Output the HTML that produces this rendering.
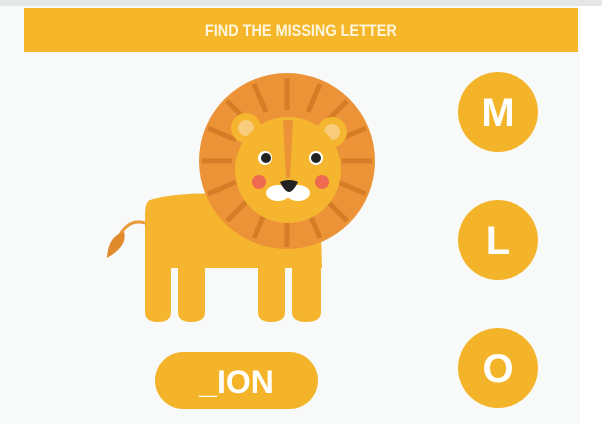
<!DOCTYPE html>
<html><head><style>
body{margin:0;width:602px;height:424px;background:#fff;overflow:hidden;font-family:"Liberation Sans",sans-serif;position:relative}
.top{position:absolute;left:0;top:0;width:602px;height:6px;background:#e4e6e8}
.page{position:absolute;left:0;top:6px;width:580px;height:418px;background:#f8f9f9}
.ban{position:absolute;left:24px;top:8px;width:554px;height:44px;background:#f5b62a;color:#fff6dd;font-weight:bold;font-size:17px;text-align:center;line-height:46px;letter-spacing:0px}
.ban span{display:inline-block;transform:scaleX(0.85)}
.c{position:absolute;width:80px;height:80px;border-radius:50%;background:#f4b42a;color:#fff;font-weight:900;font-size:40px;text-align:center;line-height:82px;left:458px}
.pill{position:absolute;left:155px;top:352px;width:163px;height:57px;border-radius:29px;background:#f4b42a;color:#fff;font-weight:900;font-size:32px;text-align:center;line-height:60px}
</style></head><body>
<div class="top"></div><div class="page"></div>
<div class="ban"><span>FIND THE MISSING LETTER</span></div>
<div class="c" style="top:72px">M</div>
<div class="c" style="top:200px">L</div>
<div class="c" style="top:328px">O</div>
<div class="pill">_ION</div>
<svg style="position:absolute;left:0;top:0" width="602" height="424">
<path d="M150 225 Q130 215 118 238" stroke="#e99a3a" stroke-width="3" fill="none"/>
<path d="M107 258 Q108 236 124 232 Q128 246 107 258Z" fill="#e08a2c"/>
<path d="M150 200 Q180 190 260 195 L320 200 L322 268 L145 268 L145 215 Q145 202 150 200Z" fill="#f5b52e"/>
<path d="M145 260 L171 260 L171 312 Q171 322 158 322 Q145 322 145 312Z" fill="#f5b52e"/>
<path d="M178 260 L205 260 L205 312 Q205 322 191 322 Q178 322 178 312Z" fill="#f5b52e"/>
<path d="M258 260 L285 260 L285 312 Q285 322 271 322 Q258 322 258 312Z" fill="#f5b52e"/>
<path d="M292 260 L321 260 L321 312 Q321 322 306 322 Q292 322 292 312Z" fill="#f5b52e"/>
<circle cx="287" cy="161" r="88" fill="#eb9336"/>
<g stroke="#d67c26" stroke-width="5">
<line x1="287" y1="78" x2="287" y2="110"/><line x1="287" y1="215" x2="287" y2="247"/>
<line x1="202" y1="161" x2="232" y2="161"/><line x1="342" y1="161" x2="372" y2="161"/>
<line x1="227" y1="101" x2="249" y2="123"/><line x1="347" y1="101" x2="325" y2="123"/>
<line x1="227" y1="221" x2="249" y2="199"/><line x1="347" y1="221" x2="325" y2="199"/>
<line x1="254" y1="84" x2="266" y2="112"/><line x1="320" y1="84" x2="308" y2="112"/>
<line x1="208" y1="128" x2="236" y2="140"/><line x1="366" y1="128" x2="338" y2="140"/>
<line x1="208" y1="194" x2="236" y2="182"/><line x1="366" y1="194" x2="338" y2="182"/>
<line x1="254" y1="238" x2="266" y2="210"/><line x1="320" y1="238" x2="308" y2="210"/>
</g>
<circle cx="246" cy="128" r="15" fill="#f5b52e"/><circle cx="246" cy="128" r="8" fill="#f8cc7a"/>
<circle cx="332" cy="132" r="15" fill="#f5b52e"/><circle cx="332" cy="132" r="8" fill="#f8cc7a"/>
<circle cx="288" cy="170" r="53" fill="#f5b52e"/>
<path d="M283 120 L293 120 L290 178 L286 178Z" fill="#eb9336"/>
<circle cx="265" cy="158" r="7" fill="#fff"/><circle cx="266" cy="158" r="5" fill="#222"/>
<circle cx="316" cy="158" r="7" fill="#fff"/><circle cx="316" cy="158" r="5" fill="#222"/>
<circle cx="259" cy="182" r="7" fill="#ee6a50"/><circle cx="322" cy="182" r="7" fill="#ee6a50"/>
<ellipse cx="278" cy="193" rx="12" ry="8" fill="#fff"/><ellipse cx="298" cy="193" rx="12" ry="8" fill="#fff"/>
<path d="M280 182 Q289 178 298 182 Q293 192 289 192 Q285 192 280 182Z" fill="#222"/>
</svg>
</body></html>
